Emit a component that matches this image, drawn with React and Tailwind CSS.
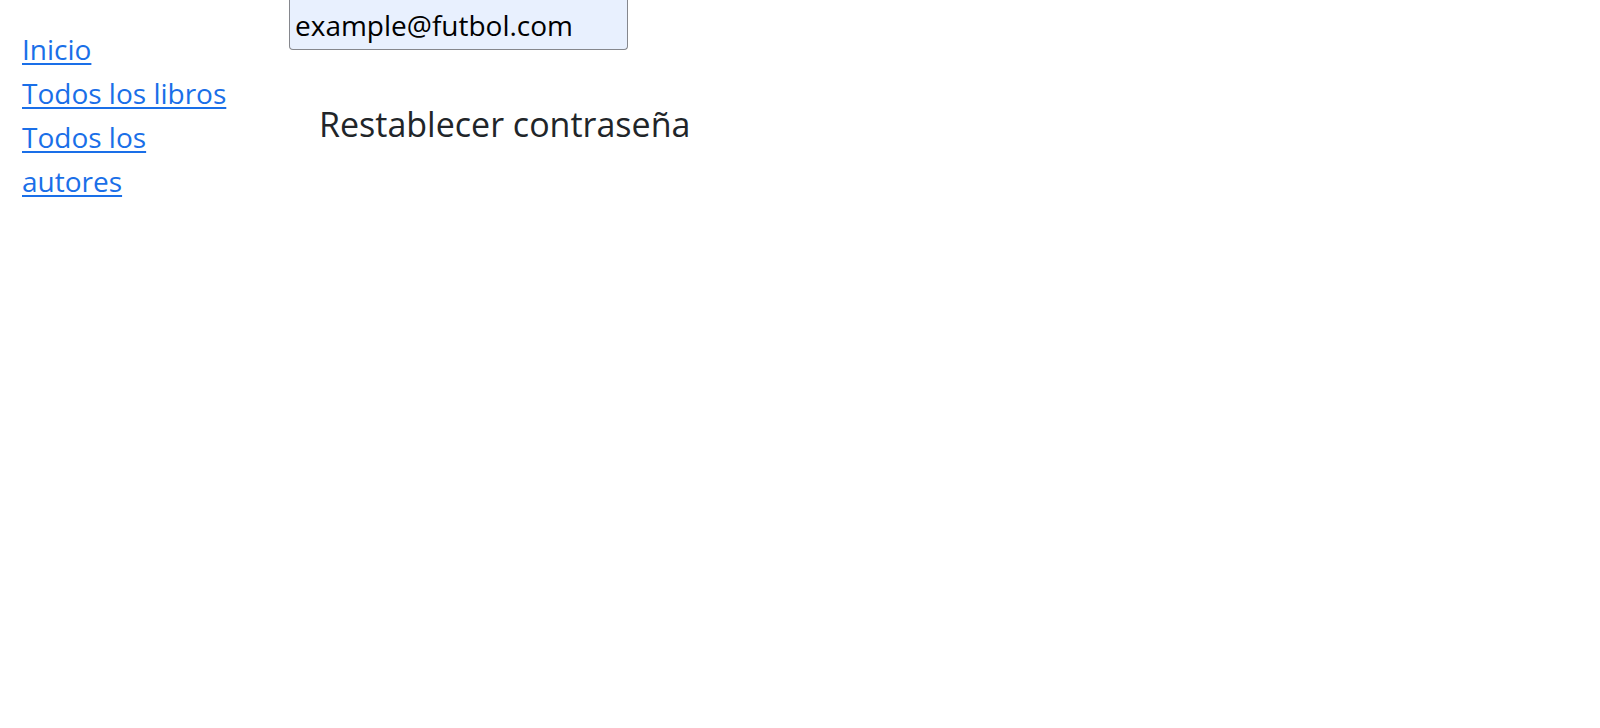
const links = ['Inicio', 'Todos los libros', 'Todos los autores'];

export default function App() {
  return (
    <div className="flex min-h-screen items-start bg-white font-['Open_Sans',sans-serif] text-[#212529]">
      <nav aria-label="Principal" className="w-[252px] shrink-0 pt-[27px] pl-[22px]">
        <ul>
          {links.map((label) => (
            <li key={label} className="text-[28px] leading-[44px]">
              <a
                href="#"
                className="text-[#1a6fe8] underline decoration-2 underline-offset-3"
              >
                {label}
              </a>
            </li>
          ))}
        </ul>
      </nav>
      <main className="min-w-0 flex-1 pl-[37px]">
        <form className="flex flex-col items-start">
          <input
            type="email"
            aria-label="Correo electrónico"
            defaultValue="example@futbol.com"
            className="h-[50px] w-[339px] rounded-b-sm border border-t-0 border-[#85878d] bg-[#e8f0fe] px-[5px] text-[28px] text-black outline-none"
          />
          <button
            type="button"
            className="mt-[46px] ml-[30px] text-left text-[34px] leading-[56px]"
          >
            Restablecer contraseña
          </button>
        </form>
      </main>
    </div>
  );
}
